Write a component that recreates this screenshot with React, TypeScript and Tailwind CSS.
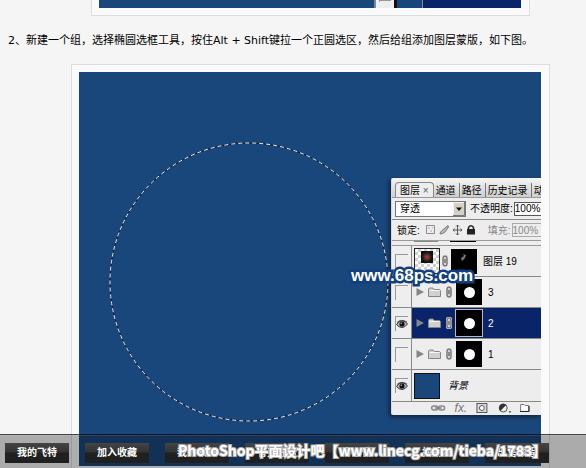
import React from "react";

const navItems = ["我的飞特", "加入收藏", "我的收藏", "有奖任务", "写心情", "找朋友", "出售教程"];
const tabs = ["通道", "路径", "历史记录", "动作"];

function EyeIcon() {
  return (
    <svg viewBox="0 0 12 10" className="h-[10px] w-3" aria-hidden="true">
      <path d="M0.5 5.5Q3 1.5 6 1.8Q9.5 1.8 11.5 5Q9 8.5 6 8.5Q3 8.5 0.5 5.5Z" fill="#bbb" stroke="#333" />
      <circle cx="6" cy="5" r="2.6" fill="#111" />
      <circle cx="5.2" cy="4.2" r="0.7" fill="#ddd" />
      <path d="M1 3.5Q5 -0.5 11 3" fill="none" stroke="#444" strokeWidth="0.9" />
    </svg>
  );
}

function LinkIcon() {
  return (
    <svg viewBox="0 0 6 12" className="h-3 w-[6px] shrink-0" aria-hidden="true">
      <rect width="6" height="12" rx="2" fill="#d2d2d2" />
      <rect x="1" y="1" width="4" height="10" rx="2" fill="none" stroke="#555" />
      <path d="M3 4V8" stroke="#444" />
    </svg>
  );
}

function FolderIcon() {
  return (
    <svg viewBox="0 0 13 11" className="h-[11px] w-[13px] shrink-0" aria-hidden="true">
      <path d="M0.5 9.5V2L1.5 1H5L6.5 2.5H11.5L12.5 3.5V9.5Z" fill="#d0d0d0" stroke="#858585" />
      <path d="M1.5 3.5H11.5" stroke="#f4f4f4" />
    </svg>
  );
}

function Triangle() {
  return (
    <svg viewBox="0 0 8 8" className="h-2 w-2 shrink-0" aria-hidden="true">
      <path d="M0.5 0L8 4L0.5 8Z" fill="#868686" />
    </svg>
  );
}

function Visibility({ on, name }: { on?: boolean; name: string }) {
  return (
    <div className="flex w-5 shrink-0 items-center justify-center self-stretch border-r border-[#888] bg-[#eee]">
      <button
        type="button"
        aria-label={"可见性 " + name}
        className="flex h-[15px] w-[13px] items-center justify-center border-t border-l border-[#999]"
      >
        {on && <EyeIcon />}
      </button>
    </div>
  );
}

function GroupRow({ name, on, selected }: { name: string; on?: boolean; selected?: boolean }) {
  return (
    <li className={"flex h-[31px] items-center border-b border-[#888] " + (selected ? "bg-[#0a246a] text-white" : "")}>
      <Visibility on={on} name={name} />
      <div className="flex items-center pl-1">
        <Triangle />
        <span className="w-1" />
        <FolderIcon />
        <span className="w-[5px]" />
        <LinkIcon />
        <span
          className={
            "ml-1 flex size-[26px] items-center justify-center bg-black " + (selected ? "outline outline-[#b9b9b9]" : "")
          }
        >
          <span className="size-[11px] rounded-full bg-white" />
        </span>
        <span className="pl-[6px]">{name}</span>
      </div>
    </li>
  );
}

function LayersPanel() {
  return (
    <section className="relative w-[150px] overflow-hidden rounded-l-xs border-l border-[#d8d8d8] bg-[#ededed] text-[10px] leading-[13px] text-black shadow-[-2px_2px_4px_rgba(0,0,0,0.5)]">
      <div className="flex h-5 items-end overflow-hidden border-b border-[#999] bg-linear-to-b from-[#f5f5f5] to-[#cecece] whitespace-nowrap">
        <button type="button" className="ml-[3px] h-[15px] shrink-0 rounded-t-sm border border-b-0 border-[#888] bg-[#ededed] px-1">
          图层 <span className="text-[#555]">×</span>
        </button>
        {tabs.map((tab) => (
          <button key={tab} type="button" className="h-[14px] shrink-0 border-r border-[#777] pr-[3px] pl-[2px]">
            {tab}
          </button>
        ))}
      </div>
      <div className="flex h-[22px] items-center border-b border-[#888] pl-[3px] whitespace-nowrap">
        <div className="relative">
          <select aria-label="混合模式" className="block h-4 w-[71px] appearance-none border border-[#777] bg-white pl-1 leading-[13px]">
            <option>穿透</option>
          </select>
          <svg viewBox="0 0 12 14" className="pointer-events-none absolute top-px right-px h-[14px] w-3" aria-hidden="true">
            <path d="M0 0H12V14H0Z" fill="#d4d0c8" />
            <path d="M0.5 14V0.5H12" fill="none" stroke="#f4f4f4" />
            <path d="M0 13.5H11.5V0" fill="none" stroke="#777" />
            <path d="M3 5.5H9L6 9Z" fill="#111" />
          </svg>
        </div>
        <label htmlFor="opacity" className="pl-1">不透明度:</label>
        <input id="opacity" defaultValue="100%" className="ml-px h-[14px] w-9 shrink-0 border border-[#555] bg-white" />
      </div>
      <div className="flex h-[21px] items-center border-b border-[#999] pl-[5px] whitespace-nowrap">
        <span>锁定:</span>
        <svg viewBox="0 0 54 12" className="ml-1 h-3 w-[54px] shrink-0" fill="none" aria-hidden="true">
          <path d="M2.5 1.5H10.5V9.5H2.5Z" stroke="#8c8c8c" />
          <path d="M4 3h2v2H4zM8 3h1v2H8zM6 6h2v2H6z" fill="#ccc" />
          <path d="M16 10Q16 8 18 6.5L24 1.5L24.5 3L21 8Q19 10 16 10Z" fill="#bbb" stroke="#777" />
          <path d="M33.5 1V11M29 6H38M32 2.5L33.5 1L35 2.5M32 9.5L33.5 11L35 9.5M30.5 4.5L29 6L30.5 7.5M36.5 4.5L38 6L36.5 7.5" stroke="#555" />
          <path d="M44.5 6V3.5Q47 0 49.5 3.5V6" stroke="#222" strokeWidth="1.5" />
          <path d="M43 5H51V10.5H43Z" fill="#222" />
        </svg>
        <label htmlFor="fill" className="pl-[10px] text-[#888]">填充:</label>
        <input id="fill" defaultValue="100%" className="ml-px h-[14px] w-9 shrink-0 border border-[#aaa] text-[#888]" />
      </div>
      <div className="flex h-[5px] items-start border-b border-[#999]">
        <span className="ml-[22px] h-px w-6 bg-[#888]" />
        <span className="ml-3 h-px w-[26px] bg-black" />
      </div>
      <ul>
        <li className="flex h-[31px] items-center border-b border-[#888]">
          <Visibility name="图层 19" />
          <div className="flex items-center pl-[2px]">
            <span className="flex size-[26px] justify-center border border-[#222] bg-[repeating-conic-gradient(#d0d0d0_0_25%,#fff_0_50%)] bg-size-[6px_6px] pt-[2px]">
              <span className="size-3 bg-[radial-gradient(circle,#8f3d38_0_1px,#111_5px)]" />
            </span>
            <span className="w-[2px]" />
            <LinkIcon />
            <span className="ml-[3px] h-[25px] w-[26px] bg-black">
              <svg viewBox="0 0 26 25" aria-hidden="true">
                <path d="M10 9L13 7L12 5L15 6L14 9L11 12Z" fill="#777" />
              </svg>
            </span>
            <span className="pl-[6px]">图层 19</span>
          </div>
        </li>
        <GroupRow name="3" />
        <GroupRow name="2" on selected />
        <GroupRow name="1" />
        <li className="flex h-8 items-center border-b border-[#888]">
          <Visibility on name="背景" />
          <span className="ml-[2px] size-[26px] border border-[#111] bg-[#1a477b]" />
          <span className="pl-2 italic">背景</span>
        </li>
      </ul>
      <svg viewBox="0 0 150 13" className="block h-[13px] w-full" fill="none" aria-hidden="true">
        <g stroke="#888" strokeWidth="1.5">
          <rect x="40" y="4" width="6" height="4" rx="2" />
          <rect x="47" y="4" width="6" height="4" rx="2" />
          <path d="M43 6H50" />
        </g>
        <text x="63" y="10" fontSize="12" fontStyle="italic" fontFamily="Liberation Sans, sans-serif" fill="#777">fx.</text>
        <rect x="85.5" y="1.5" width="10" height="9" fill="#ddd" stroke="#555" />
        <circle cx="90.5" cy="6" r="2.5" fill="#fff" stroke="#555" />
        <circle cx="112" cy="6" r="4" fill="#eee" stroke="#555" />
        <path d="M109 9A4 4 0 0 1 115 3Z" fill="#333" />
        <path d="M118 9h1.5v1.5H118z" fill="#333" />
        <path d="M129.5 9.5V2.5H133L134 3.5H137.5V9.5Z" fill="#fff" stroke="#777" />
        <path d="M129 9.5H138V4" stroke="#222" />
      </svg>
    </section>
  );
}

export default function App() {
  return (
    <div className="relative h-screen overflow-hidden bg-[#f5f5f5] font-['Liberation_Sans','Noto_Sans_CJK_SC',sans-serif]">
      <article>
        <div className="flex justify-center pl-[35px]">
          <figure className="w-[439px] shrink-0 border border-t-0 border-[#ddd] bg-[#fafafa] pr-2 pb-[7px] pl-[7px]">
            <div className="flex h-2 justify-end bg-[#1a477b]">
              <span className="flex w-5 justify-center border-l-2 border-[#7b8896] bg-[#eee]">
                <span className="h-[2px] w-3 border-t border-l border-[#999]" />
              </span>
              <span className="w-[29px] border-r border-l-3 border-r-[#888] border-l-[#111] bg-[#1a477b]" />
              <span className="w-[98px] bg-[#0a246a]" />
            </div>
          </figure>
        </div>
        <p className="px-2 pt-4 pb-[14px] font-['DejaVu_Sans','Noto_Sans_CJK_SC',sans-serif] text-[11px] leading-[18px] whitespace-nowrap text-black">
          2、新建一个组，选择椭圆选框工具，按住Alt + Shift键拉一个正圆选区，然后给组添加图层蒙版，如下图。
        </p>
        <div className="flex justify-center pl-[35px]">
          <figure className="w-[479px] shrink-0 border border-[#ddd] bg-[#fafafa] py-[7px] pr-2 pl-[7px]">
            <div className="relative flex h-[394px] justify-end overflow-hidden bg-[#1a477b] pt-[106px]">
              <svg viewBox="0 0 462 394" className="absolute top-0 left-0 h-[394px] w-[462px]" fill="none" aria-hidden="true">
                <circle cx="170" cy="210" r="139" stroke="#081b38" />
                <circle cx="170" cy="210" r="139" stroke="#f4f4f4" strokeDasharray="4 3" />
              </svg>
              <div>
                <LayersPanel />
              </div>
              <span className="absolute top-[192px] left-[272px] text-[17px] leading-6 font-bold text-white [-webkit-text-stroke:5px_#123f7d] [paint-order:stroke_fill]">
                www.68ps.com
              </span>
            </div>
          </figure>
        </div>
      </article>
      <nav className="absolute inset-x-0 bottom-0 h-[34px] border-t border-black/60 bg-black/30">
        <ul className="flex gap-4 border-t border-white/10 px-[5px] pt-[7px]">
          {navItems.map((item) => (
            <li key={item} className="shrink-0">
              <a
                href="#"
                className="flex h-5 w-16 items-center justify-center bg-linear-to-b from-[#444] from-0% via-[#333] via-45% to-[#202020] to-50% text-[10px] leading-5 font-bold text-white"
              >
                {item}
              </a>
            </li>
          ))}
        </ul>
      </nav>
      <p className="absolute bottom-2 left-[178px] font-['Noto_Sans_CJK_SC',sans-serif] text-[14px] leading-5 font-bold whitespace-nowrap text-white [-webkit-text-stroke:2px_#aaa] [paint-order:stroke_fill]">
        PhotoShop平面设计吧【www.linecg.com/tieba/1783】
      </p>
    </div>
  );
}
